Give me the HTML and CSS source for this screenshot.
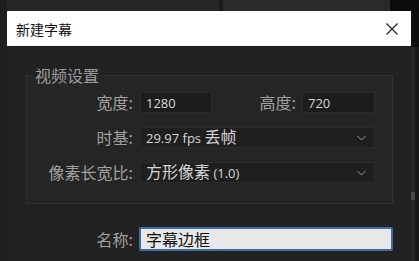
FILE: index.html
```html
<!DOCTYPE html>
<html lang="zh">
<head>
<meta charset="utf-8">
<title>新建字幕</title>
<link rel="stylesheet" href="styles.css">
</head>
<body>
<div class="top">
  <div class="seg seg-a"></div>
  <div class="seg seg-b"></div>
  <div class="seg seg-c"></div>
  <div class="seg seg-d"></div>
  <div class="seg seg-e"></div>
</div>
<div class="main">
  <div class="gutter-left"></div>
  <div class="dialog">
    <div class="titlebar">
      <span class="title">新建字幕</span>
      <svg class="close" width="12" height="12" viewBox="0 0 12 12"><path d="M0.5 0.5 L11.5 11.5 M11.5 0.5 L0.5 11.5" stroke="#1a1a1a" stroke-width="1.1" fill="none"/></svg>
    </div>
    <div class="content">
      <fieldset class="group">
        <legend class="legend">视频设置</legend>
        <div class="row">
          <span class="label">宽度:</span>
          <div class="field field-w"><span class="lat">1280</span></div>
          <span class="label label-h">高度:</span>
          <div class="field field-h"><span class="lat">720</span></div>
        </div>
        <div class="row">
          <span class="label">时基:</span>
          <div class="field select"><span class="val"><span class="lat">29.97 fps </span>丢帧</span>
            <svg class="chev" width="9" height="6" viewBox="0 0 9 6"><path d="M0.5 1 L4.5 5 L8.5 1" stroke="#9a9a9a" stroke-width="1" fill="none"/></svg>
          </div>
        </div>
        <div class="row">
          <span class="label">像素长宽比:</span>
          <div class="field select"><span class="val">方形像素<span class="lat"> (1.0)</span></span>
            <svg class="chev" width="9" height="6" viewBox="0 0 9 6"><path d="M0.5 1 L4.5 5 L8.5 1" stroke="#9a9a9a" stroke-width="1" fill="none"/></svg>
          </div>
        </div>
      </fieldset>
      <div class="name-row">
        <span class="label name-label">名称:</span>
        <div class="name-input">字幕边框</div>
      </div>
    </div>
  </div>
  <div class="gutter-right">
    <div class="gr-title"></div>
    <div class="gr-body">
      <div class="track"><div class="thumb"></div></div>
      <div class="edge"></div>
    </div>
  </div>
</div>
</body>
</html>
```
FILE: styles.css
```css
html, body {
  margin: 0;
  padding: 0;
}
body {
  width: 419px;
  height: 261px;
  overflow: hidden;
  background: #1c1c1c;
  font-family: "Noto Sans CJK SC", "Noto Sans", sans-serif;
  display: flex;
  flex-direction: column;
}
.top {
  height: 11px;
  display: flex;
  flex: none;
}
.seg { height: 100%; }
.seg-a { width: 7px; background: #1d1d1d; }
.seg-b { width: 212px; background: #262626; }
.seg-c { width: 4px; background: #1a1a1a; }
.seg-d { width: 167px; background: #2a2a2a; }
.seg-e { flex: 1; background: #0b0b0b; }

.main {
  flex: 1;
  display: flex;
}
.gutter-left {
  width: 7px;
  background: #1f1f1f;
}
.dialog {
  width: 404px;
  display: flex;
  flex-direction: column;
  background: #222222;
}
.titlebar {
  height: 36px;
  background: #ffffff;
  display: flex;
  align-items: center;
  justify-content: space-between;
  padding: 0 13px 0 9px;
  border-bottom: 1px solid #151515;
  box-sizing: border-box;
}
.title {
  font-size: 14px;
  color: #111111;
  line-height: 20px;
}
.close {
  display: block;
}
.content {
  padding: 19px 18px 0 19px;
}
.group {
  margin: 0;
  padding: 8px 0 20px 0;
  border: 1px solid #303030;
  background: #252525;
  min-width: 0;
}
.legend {
  margin-left: 5px;
  padding: 0 3px;
  font-size: 16px;
  line-height: 18px;
  color: #9a9a9a;
}
.row {
  display: flex;
  align-items: center;
  height: 21px;
  margin-bottom: 14px;
}
.row:last-child { margin-bottom: 0; }
.label {
  width: 106px;
  margin-right: 7px;
  text-align: right;
  font-size: 16px;
  color: #a0a0a0;
  line-height: 21px;
  white-space: nowrap;
}
.label-h {
  width: 84px;
  margin-right: 6px;
}
.field {
  height: 21px;
  box-sizing: border-box;
  background: #1c1c1c;
  border: 1px solid #2b2b2b;
  display: flex;
  align-items: center;
  padding-left: 5px;
  color: #d6d6d6;
  font-size: 16px;
}
.field-w { width: 72px; }
.field-h { width: 73px; }
.select {
  width: 235px;
  justify-content: space-between;
  padding-right: 8px;
  background: #1f1f1f;
}
.val {
  line-height: 19px;
  white-space: nowrap;
}
.lat {
  font-family: "Open Sans", "Noto Sans", sans-serif;
  font-size: 13px;
}
.chev { display: block; }
.name-row {
  display: flex;
  align-items: center;
  margin-top: 23px;
}
.name-label {
  width: 107px;
  margin-right: 6px;
}
.name-input {
  width: 254px;
  height: 24px;
  box-sizing: border-box;
  background: #e8e8e8;
  border: 2px solid #3a6ea5;
  border-radius: 2px;
  color: #111111;
  font-size: 16px;
  line-height: 20px;
  padding-left: 5px;
}
.gutter-right {
  flex: 1;
  display: flex;
  flex-direction: column;
}
.gr-title {
  height: 36px;
  background: #0d0d0d;
}
.gr-body {
  flex: 1;
  display: flex;
}
.track {
  width: 4px;
  background: #262626;
  padding-top: 145px;
}
.thumb {
  height: 8px;
  background: #4a4a4a;
}
.edge {
  flex: 1;
  background: #171717;
}
```
